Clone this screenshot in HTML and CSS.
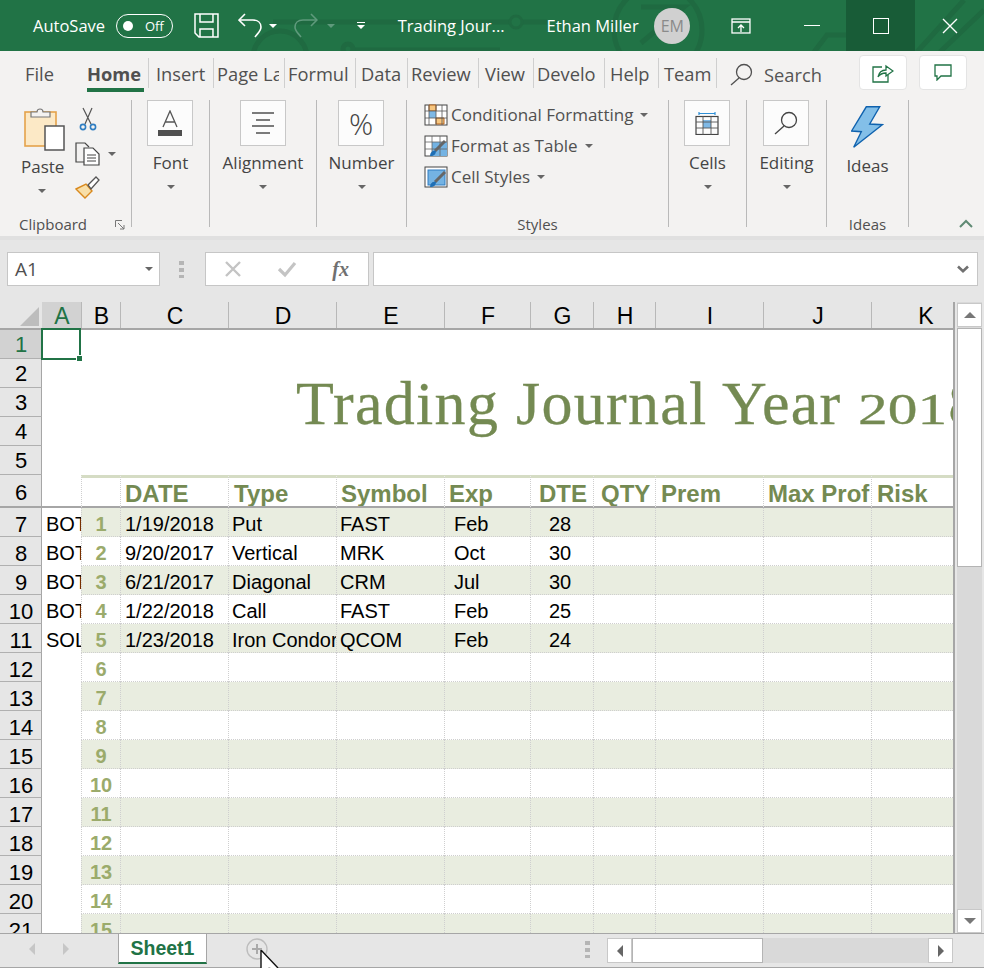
FILE: index.html
```html
<!DOCTYPE html>
<html lang="en">
<head>
<meta charset="UTF-8" />
<title>Trading Journal - Excel</title>
<link rel="stylesheet" href="styles.css">
</head>
<body>

<!-- title bar -->
<header class="titlebar">
  <svg class="circuit" width="984" height="51" viewBox="0 0 984 51" fill="none" stroke="#1f6a41" stroke-width="5">
    <path d="M273 22H547" />
    <circle cx="516" cy="22" r="6" stroke-width="3" fill="#217346" />
    <circle cx="280" cy="58" r="27" />
    <path d="M353 50H500" />
    <circle cx="348" cy="49" r="5" />
    <circle cx="658" cy="30" r="44" />
    <path d="M641 7H684L641 43" />
    <path d="M814 52L827 35H847M917 52L964 0M940 52L984 10" />
  </svg>
  <span class="autosave">AutoSave</span>
  <span class="toggle"><i></i>Off</span>
  <svg class="qat save" width="25" height="25" viewBox="0 0 25 25" fill="none" stroke="#fff" stroke-width="1.5">
    <path d="M1 1H24V24H5L1 20Z" /><path d="M6 1V9H19V1M6 24V16H19V24" />
  </svg>
  <svg class="qat undo" width="24" height="26" viewBox="0 0 24 26" fill="none" stroke="#fff" stroke-width="1.6">
    <path d="M1 7H15C20 7 23 10 23 14C23 18 20 20 17 24" /><path d="M7 1L1 7L7 13" />
  </svg>
  <i class="caret white undo-caret"></i>
  <svg class="qat redo" width="24" height="26" viewBox="0 0 24 26" fill="none" stroke="#5f9a7c" stroke-width="1.6">
    <path d="M23 7H9C4 7 1 10 1 14C1 18 4 20 7 24" /><path d="M17 1L23 7L17 13" />
  </svg>
  <i class="caret faded redo-caret"></i>
  <span class="qat-more"><b></b><i class="caret white"></i></span>
  <span class="doc-name">Trading Jour...</span>
  <span class="user-name">Ethan Miller</span>
  <span class="avatar">EM</span>
  <svg class="display-btn" width="20" height="16" viewBox="0 0 20 16" fill="none" stroke="#fff" stroke-width="1.3">
    <rect x="1" y="1" width="18" height="14" /><path d="M1 4H19M10 14V7M7 10L10 7L13 10" />
  </svg>
  <div class="win-btn min"><span></span></div>
  <div class="win-btn max"><span></span></div>
  <div class="win-btn close">
    <svg width="16" height="16" viewBox="0 0 16 16" stroke="#fff" stroke-width="1.4"><path d="M1 1L15 15M15 1L1 15" /></svg>
  </div>
</header>

<!-- ribbon tabs -->
<nav class="tabs">
  <span class="tab tab-file">File</span>
  <span class="tab tab-home">Home</span>
  <span class="tab w64">Insert</span>
  <span class="tab w71 cut">Page La</span>
  <span class="tab w71">Formul</span>
  <span class="tab w52">Data</span>
  <span class="tab w71">Review</span>
  <span class="tab w55">View</span>
  <span class="tab w71">Develo</span>
  <span class="tab w54">Help</span>
  <span class="tab w59">Team</span>
  <span class="search">
    <svg width="23" height="23" viewBox="0 0 23 23" fill="none" stroke="#505050" stroke-width="1.3"><circle cx="14" cy="9" r="7.5" /><path d="M9 15L1 22" /></svg>
    Search
  </span>
  <span class="pill share">
    <svg width="22" height="20" viewBox="0 0 22 20" fill="none" stroke="#217346" stroke-width="1.3"><path d="M10 4H1V19H16V12" /><path d="M6 14C7 9 10 7 14 7V3L21 8L14 13V10C11 10 8 11 6 14Z" /></svg>
  </span>
  <span class="pill comment">
    <svg width="18" height="17" viewBox="0 0 18 17" fill="none" stroke="#217346" stroke-width="1.3"><path d="M1 1H17V12H7L3 16V12H1Z" /></svg>
  </span>
</nav>

<!-- ribbon -->
<section class="ribbon">
  <div class="group g-clip">
    <div class="clip-body">
      <div class="paste">
        <svg width="42" height="45" viewBox="0 0 42 45" fill="none">
          <rect x="1" y="6" width="31" height="34" fill="#fce9c6" stroke="#e4a24a" stroke-width="1.6" />
          <path d="M7 11V6H13C13 2 19 2 19 6H26V11Z" fill="#f4f2f0" stroke="#777" stroke-width="1.2" />
          <rect x="21" y="20" width="19" height="24" fill="#fff" stroke="#555" stroke-width="1.5" />
        </svg>
        <span class="paste-label">Paste</span>
        <i class="caret"></i>
      </div>
      <div class="clip-tools">
        <svg width="18" height="25" viewBox="0 0 18 25" fill="none">
          <path d="M4 1L12 17M13 1L6 17" stroke="#555" stroke-width="1.2" />
          <circle cx="4" cy="20" r="2.6" stroke="#2f7dc1" stroke-width="1.6" />
          <circle cx="14" cy="20" r="2.6" stroke="#2f7dc1" stroke-width="1.6" />
        </svg>
        <span class="copy-row">
          <svg width="25" height="24" viewBox="0 0 25 24" fill="none" stroke="#444" stroke-width="1.2">
            <path d="M12 20H1V1H10L14 5" /><path d="M9 6H18L24 12V23H9Z" fill="#fff" /><path d="M12 13H21M12 16H21M12 19H21" />
          </svg>
          <i class="caret"></i>
        </span>
        <svg width="25" height="23" viewBox="0 0 25 23">
          <path d="M1 13L11 8L17 15L10 22Z" fill="#f8dfa8" stroke="#d98a1f" stroke-width="1.4" />
          <path d="M13 9L21 1L24 4L16 13Z" fill="#fff" stroke="#555" stroke-width="1.3" />
        </svg>
      </div>
    </div>
    <div class="group-label">Clipboard
      <svg class="launcher" width="10" height="10" viewBox="0 0 10 10" fill="none" stroke="#777"><path d="M.5 7V.5H7M3 3L9 9M9 5V9H5" /></svg>
    </div>
  </div>

  <div class="group g-font">
    <span class="big-btn">
      <svg width="26" height="26" viewBox="0 0 26 26" fill="none"><path d="M6 17L13 1L20 17M8 12H18" stroke="#555" stroke-width="1.3" /><rect x="1" y="20" width="24" height="6" fill="#505050" /></svg>
    </span>
    <span class="btn-label">Font</span><i class="caret"></i>
  </div>

  <div class="group g-align">
    <span class="big-btn">
      <svg width="24" height="22" viewBox="0 0 24 22" stroke="#505050" stroke-width="1.4"><path d="M1 1H23M5 8H19M1 14H23M5 21H19" /></svg>
    </span>
    <span class="btn-label">Alignment</span><i class="caret"></i>
  </div>

  <div class="group g-number">
    <span class="big-btn percent">%</span>
    <span class="btn-label">Number</span><i class="caret"></i>
  </div>

  <div class="group g-styles">
    <ul class="style-list">
      <li>
        <svg width="24" height="22" viewBox="0 0 24 22" fill="none">
          <rect x="1" y="1" width="22" height="20" fill="#fff" stroke="#444" />
          <path d="M5 1H12V7H5ZM12 14H20V20H12Z" fill="#f7c67f" stroke="#b4631c" /><rect x="5" y="7" width="7" height="7" fill="#7fb9e6" />
          <path d="M1 7H23M1 14H23M5 1V21M12 1V21M18 1V21" stroke="#555" stroke-width=".8" />
        </svg>
        Conditional Formatting <i class="caret"></i>
      </li>
      <li>
        <svg width="24" height="22" viewBox="0 0 24 22" fill="none">
          <rect x="1" y="1" width="22" height="20" fill="#fff" stroke="#444" />
          <rect x="8" y="7" width="15" height="14" fill="#74b3e3" />
          <path d="M1 7H23M1 14H23M8 1V21M16 1V21" stroke="#666" stroke-width=".8" />
          <path d="M11 16L21 6" stroke="#666" stroke-width="3" /><path d="M6 21C6 17 9 15 12 16C12 19 10 21 6 21Z" fill="#1f6fb5" />
        </svg>
        Format as Table <i class="caret"></i>
      </li>
      <li>
        <svg width="24" height="22" viewBox="0 0 24 22" fill="none">
          <rect x="1" y="1" width="22" height="20" fill="#fff" stroke="#444" />
          <rect x="4" y="4" width="17" height="15" fill="#74b3e3" stroke="#2f7dc1" />
          <path d="M11 16L21 6" stroke="#666" stroke-width="3" /><path d="M6 21C6 17 9 15 12 16C12 19 10 21 6 21Z" fill="#1f6fb5" />
        </svg>
        Cell Styles <i class="caret"></i>
      </li>
    </ul>
    <div class="group-label">Styles</div>
  </div>

  <div class="group g-cells">
    <span class="big-btn">
      <svg width="24" height="23" viewBox="0 0 24 23" fill="none">
        <path d="M4 1.5H20M4 0V3M20 0V3" stroke="#2f8fd6" stroke-width="1.2" />
        <rect x="8" y="8" width="8" height="8" fill="#7fb9e6" />
        <rect x="1" y="4.5" width="22" height="18" stroke="#444" stroke-width="1.2" />
        <path d="M1 10H23M1 16H23M8 4V23M16 4V23" stroke="#555" stroke-width=".9" />
      </svg>
    </span>
    <span class="btn-label">Cells</span><i class="caret"></i>
  </div>

  <div class="group g-edit">
    <span class="big-btn">
      <svg width="24" height="24" viewBox="0 0 24 24" fill="none" stroke="#444" stroke-width="1.3"><circle cx="15" cy="9" r="7.5" /><path d="M10 15L1 23" /></svg>
    </span>
    <span class="btn-label">Editing</span><i class="caret"></i>
  </div>

  <div class="group g-ideas">
    <svg class="bolt" width="33" height="43" viewBox="0 0 33 43"><path d="M15.3 .8H28.7L18.7 18L31.3 18.7L2.7 41.3L10.3 25.7L.6 25Z" fill="#83bfe8" stroke="#0f62ae" stroke-width="1.4" /></svg>
    <span class="ideas-label">Ideas</span>
    <div class="group-label">Ideas</div>
  </div>

  <svg class="collapse" width="14" height="9" viewBox="0 0 14 9" fill="none" stroke="#5f8a74" stroke-width="2"><path d="M1 8L7 2L13 8" /></svg>
</section>

<!-- formula bar -->
<section class="formula">
  <div class="namebox">A1<i class="caret"></i></div>
  <span class="grip"></span>
  <div class="fx-box">
    <svg width="18" height="18" viewBox="0 0 18 18" stroke="#c4c4c4" stroke-width="2.4"><path d="M2 2L16 16M16 2L2 16" /></svg>
    <svg width="20" height="18" viewBox="0 0 20 18" fill="none" stroke="#c4c4c4" stroke-width="3.2"><path d="M2 9L8 15L18 3" /></svg>
    <span class="fx">fx</span>
  </div>
  <div class="formula-input">
    <svg width="12" height="8" viewBox="0 0 12 8" fill="none" stroke="#707070" stroke-width="2.6"><path d="M1 1.5L6 6.2L11 1.5" /></svg>
  </div>
</section>

<!-- sheet and vertical scrollbar -->
<section class="workarea">
  <div class="sheet">
    <div class="row heads">
      <span class="corner"><b></b></span>
      <span class="sel">A</span><span>B</span><span>C</span><span>D</span><span>E</span><span>F</span><span>G</span><span>H</span><span>I</span><span>J</span><span>K</span>
    </div>
    <div class="banner">
      <div class="banner-heads">
        <span class="rh sel">1</span><span class="rh">2</span><span class="rh">3</span><span class="rh">4</span><span class="rh">5</span>
      </div>
      <div class="title">Trading Journal Year <span class="onum">201</span>8</div>
    </div>
    <div class="row thead">
      <span class="rh">6</span><span class="a"></span><span></span>
      <span>DATE</span><span>Type</span><span>Symbol</span><span>Exp</span><span class="c-dte">DTE</span><span class="c-qty">QTY</span><span>Prem</span><span>Max Prof</span><span>Risk</span>
    </div>
    <div class="row band"><span class="rh">7</span><span class="a">BOT</span><span class="n">1</span><span>1/19/2018</span><span>Put</span><span>FAST</span><span class="exp">Feb</span><span class="dte">28</span><span></span><span></span><span></span><span></span></div>
    <div class="row"><span class="rh">8</span><span class="a">BOT</span><span class="n">2</span><span>9/20/2017</span><span>Vertical</span><span>MRK</span><span class="exp">Oct</span><span class="dte">30</span><span></span><span></span><span></span><span></span></div>
    <div class="row band"><span class="rh">9</span><span class="a">BOT</span><span class="n">3</span><span>6/21/2017</span><span>Diagonal</span><span>CRM</span><span class="exp">Jul</span><span class="dte">30</span><span></span><span></span><span></span><span></span></div>
    <div class="row"><span class="rh">10</span><span class="a">BOT</span><span class="n">4</span><span>1/22/2018</span><span>Call</span><span>FAST</span><span class="exp">Feb</span><span class="dte">25</span><span></span><span></span><span></span><span></span></div>
    <div class="row band"><span class="rh">11</span><span class="a">SOL</span><span class="n">5</span><span>1/23/2018</span><span>Iron Condor</span><span>QCOM</span><span class="exp">Feb</span><span class="dte">24</span><span></span><span></span><span></span><span></span></div>
    <div class="row"><span class="rh">12</span><span class="a"></span><span class="n">6</span><span></span><span></span><span></span><span></span><span></span><span></span><span></span><span></span><span></span></div>
    <div class="row band"><span class="rh">13</span><span class="a"></span><span class="n">7</span><span></span><span></span><span></span><span></span><span></span><span></span><span></span><span></span><span></span></div>
    <div class="row"><span class="rh">14</span><span class="a"></span><span class="n">8</span><span></span><span></span><span></span><span></span><span></span><span></span><span></span><span></span><span></span></div>
    <div class="row band"><span class="rh">15</span><span class="a"></span><span class="n">9</span><span></span><span></span><span></span><span></span><span></span><span></span><span></span><span></span><span></span></div>
    <div class="row"><span class="rh">16</span><span class="a"></span><span class="n">10</span><span></span><span></span><span></span><span></span><span></span><span></span><span></span><span></span><span></span></div>
    <div class="row band"><span class="rh">17</span><span class="a"></span><span class="n">11</span><span></span><span></span><span></span><span></span><span></span><span></span><span></span><span></span><span></span></div>
    <div class="row"><span class="rh">18</span><span class="a"></span><span class="n">12</span><span></span><span></span><span></span><span></span><span></span><span></span><span></span><span></span><span></span></div>
    <div class="row band"><span class="rh">19</span><span class="a"></span><span class="n">13</span><span></span><span></span><span></span><span></span><span></span><span></span><span></span><span></span><span></span></div>
    <div class="row"><span class="rh">20</span><span class="a"></span><span class="n">14</span><span></span><span></span><span></span><span></span><span></span><span></span><span></span><span></span><span></span></div>
    <div class="row band"><span class="rh">21</span><span class="a"></span><span class="n">15</span><span></span><span></span><span></span><span></span><span></span><span></span><span></span><span></span><span></span></div>
    <div class="cell-cursor"><b></b></div>
  </div>
  <div class="vscroll">
    <span class="sb-btn"><i class="arrow up"></i></span>
    <span class="sb-thumb"></span>
    <span class="sb-btn sb-end"><i class="arrow down"></i></span>
  </div>
</section>

<!-- sheet tabs and horizontal scrollbar -->
<footer class="statusbar">
  <i class="arrow left pale"></i>
  <i class="arrow right pale"></i>
  <span class="sheet-tab">Sheet1</span>
  <span class="add-sheet">
    <svg width="22" height="22" viewBox="0 0 22 22" fill="none" stroke="#bdbdbd"><circle cx="11" cy="11" r="10" stroke-width="1.4" /><path d="M11 6V16M6 11H16" stroke="#aaa" stroke-width="2" /></svg>
  </span>
  <span class="grip"></span>
  <div class="hscroll">
    <span class="sb-btn"><i class="arrow left"></i></span>
    <span class="sb-thumb"></span>
    <span class="sb-btn sb-end"><i class="arrow right"></i></span>
  </div>
  <svg class="pointer" width="20" height="19" viewBox="0 0 20 19"><path d="M1 0V19H7L9 17L13 19H19L7 5Z" fill="#fff" /><path d="M1 0V19M1 0L18 18" fill="none" stroke="#111" stroke-width="1.4" /></svg>
</footer>

</body>
</html>
```

FILE: styles.css
```css
* {
  box-sizing: border-box;
}
html,
body {
  margin: 0;
  height: 968px;
  overflow: hidden;
}
body {
  width: 984px;
  display: flex;
  flex-direction: column;
  font-family: "Open Sans", "Noto Sans", sans-serif;
  color: #444;
  background: #f3f2f1;
}

/* shared bits */
.caret {
  display: inline-block;
  width: 0;
  height: 0;
  border-left: 4px solid transparent;
  border-right: 4px solid transparent;
  border-top: 4px solid #666;
}
.caret.white {
  border-top-color: #fff;
}
.caret.faded {
  border-top-color: #5f9a7c;
}
.grip {
  width: 5px;
  height: 17px;
  background: repeating-linear-gradient(#b5b5b5 0 4px, transparent 4px 7px);
}
.arrow {
  display: block;
  width: 0;
  height: 0;
  border: 6px solid transparent;
}
.arrow.up {
  border-top: 0;
  border-bottom: 6px solid #777;
}
.arrow.down {
  border-bottom: 0;
  border-top: 6px solid #777;
}
.arrow.left {
  border-left: 0;
  border-right: 6px solid #666;
}
.arrow.right {
  border-right: 0;
  border-left: 6px solid #666;
}
.arrow.left.pale {
  border-right-color: #c6c6c6;
}
.arrow.right.pale {
  border-left-color: #c6c6c6;
}

/* title bar */
.titlebar {
  position: relative;
  height: 51px;
  flex: none;
  display: flex;
  align-items: center;
  background: #217346;
  color: #fff;
  font-size: 16.5px;
}
.titlebar > * {
  position: relative;
}
.titlebar .circuit {
  position: absolute;
  left: 0;
  top: 0;
}
.autosave {
  margin-left: 33px;
  width: 83px;
}
.toggle {
  width: 57px;
  height: 24px;
  border: 1px solid #fff;
  border-radius: 12px;
  display: flex;
  align-items: center;
  justify-content: flex-end;
  padding-right: 8px;
  font-size: 13px;
}
.toggle i {
  position: absolute;
  left: 6px;
  top: 6px;
  width: 10px;
  height: 10px;
  border-radius: 50%;
  background: #fff;
}
.qat.save {
  margin-left: 21px;
}
.qat.undo {
  margin-left: 19px;
}
.undo-caret {
  margin-left: 7px;
}
.qat.redo {
  margin-left: 17px;
}
.redo-caret {
  margin-left: 9px;
}
.qat-more {
  margin-left: 22px;
  width: 8px;
  display: flex;
  flex-direction: column;
  gap: 2px;
}
.qat-more b {
  height: 1px;
  background: #fff;
}
.doc-name {
  margin-left: 33px;
  width: 149px;
  white-space: nowrap;
}
.user-name {
  width: 108px;
  white-space: nowrap;
}
.avatar {
  width: 36px;
  height: 36px;
  border-radius: 50%;
  background: #d0d0d0;
  color: #8a8a8a;
  font-size: 16px;
  display: flex;
  align-items: center;
  justify-content: center;
}
.display-btn {
  margin-left: 41px;
}
.win-btn {
  width: 69px;
  height: 51px;
  display: flex;
  align-items: center;
  justify-content: center;
}
.win-btn.min {
  margin-left: 26px;
  width: 70px;
  margin-right: -1px;
}
.win-btn.min span {
  width: 16px;
  height: 1.5px;
  background: #fff;
}
.win-btn.max {
  background: #185c37;
}
.win-btn.max span {
  width: 16px;
  height: 16px;
  border: 1.5px solid #fff;
}

/* ribbon tabs */
.tabs {
  height: 44px;
  flex: none;
  display: flex;
  align-items: flex-start;
  padding-top: 7px;
  font-size: 18.3px;
  color: #505050;
}
.tab {
  height: 30px;
  line-height: 32px;
  text-align: left;
  overflow: hidden;
  white-space: nowrap;
  border-left: 1px solid #cfcfcf;
}
.tab-file {
  width: 87px;
  padding-left: 25px;
  border-left: 0;
}
.tab-home {
  position: relative;
  width: 61px;
  border-left: 0;
  font-weight: 700;
  overflow: visible;
}
.tab-home::after {
  content: "";
  position: absolute;
  left: 0;
  top: 30px;
  width: 57px;
  height: 4px;
  background: #217346;
}
.w64 {
  width: 65px;
  padding-left: 7px;
}
.w71 {
  width: 71px;
  padding-left: 3px;
}
.w71.cut {
  width: 66px;
  margin-right: 5px;
}
.w52 {
  width: 52px;
  padding-left: 5px;
}
.w55 {
  width: 55px;
  padding-left: 6px;
}
.w54 {
  width: 54px;
  padding-left: 5px;
}
.w59 {
  width: 59px;
  padding-left: 5px;
  border-right: 1px solid #cfcfcf;
}
.search {
  margin-left: 13px;
  display: flex;
  align-items: center;
  gap: 11px;
  height: 32px;
  width: 129px;
  color: #555;
}
.pill {
  width: 48px;
  height: 35px;
  margin-top: -3px;
  background: #fff;
  border: 1px solid #e4e4e4;
  border-radius: 4px;
  display: flex;
  align-items: center;
  justify-content: center;
}
.comment {
  margin-left: 12px;
}

/* ribbon */
.ribbon {
  position: relative;
  height: 145px;
  flex: none;
  display: flex;
  padding-bottom: 9px;
  padding-top: 5px;
  background: #f3f2f1;
  border-bottom: 4px solid #e0e0e0;
  font-size: 17px;
}
.group {
  position: relative;
  display: flex;
  flex-direction: column;
  align-items: center;
  border-right: 1px solid #b9b9b9;
}
.g-clip { width: 132px; }
.g-font { width: 78px; }
.g-align { width: 107px; }
.g-number { width: 90px; }
.g-styles { width: 262px; }
.g-cells { width: 78px; }
.g-edit { width: 80px; }
.g-ideas { width: 82px; }
.group-label {
  position: absolute;
  bottom: -6px;
  left: 0;
  right: 0;
  text-align: center;
  font-size: 15px;
  line-height: 18px;
  color: #505050;
}
.group .launcher {
  position: absolute;
  left: 115px;
  top: 5px;
}
.g-clip .group-label {
  text-align: left;
  padding-left: 19px;
}
.big-btn {
  width: 46px;
  height: 46px;
  margin-right: 1px;
  background: #fcfcfc;
  border: 1px solid #c8c8c8;
  display: flex;
  align-items: center;
  justify-content: center;
}
.percent {
  font-size: 30px;
  font-weight: 300;
  color: #444;
}
.btn-label {
  margin-top: 5px;
  line-height: 24px;
}
.group > .caret {
  margin-top: 10px;
}

.clip-body {
  display: flex;
  width: 100%;
  padding: 6px 0 0 24px;
}
.paste {
  width: 51px;
  display: flex;
  flex-direction: column;
  align-items: flex-start;
}
.paste-label {
  width: 42px;
  margin-left: -3px;
  text-align: center;
  line-height: 22px;
  margin-top: 5px;
}
.paste .caret {
  margin: 11px 0 0 14px;
}
.clip-tools {
  display: flex;
  flex-direction: column;
  align-items: flex-start;
  gap: 11px;
  margin-top: 1px;
}
.clip-tools > svg:first-child {
  margin-left: 4px;
}
.copy-row {
  display: flex;
  align-items: center;
  gap: 8px;
  height: 22px;
}

.style-list {
  list-style: none;
  margin: -1px 0 0;
  padding: 0 0 0 17px;
  width: 100%;
}
.style-list li {
  height: 31px;
  display: flex;
  align-items: center;
  gap: 3px;
  white-space: nowrap;
  color: #505050;
}
.style-list .caret {
  margin-left: 4px;
}

.bolt {
  margin-top: 6px;
}
.ideas-label {
  margin-top: 5px;
  line-height: 24px;
}
.collapse {
  position: absolute;
  left: 959px;
  top: 124px;
}

/* formula bar */
.formula {
  height: 62px;
  flex: none;
  display: flex;
  align-items: flex-start;
  padding: 12px 6px 0 7px;
  background: #e6e6e6;
}
.namebox {
  width: 153px;
  height: 34px;
  background: #fff;
  border: 1px solid #c6c6c6;
  padding-left: 7px;
  line-height: 32px;
  font-size: 19px;
  color: #505050;
  display: flex;
  justify-content: space-between;
  align-items: center;
}
.namebox .caret {
  margin-right: 6px;
}
.formula .grip {
  margin: 9px 21px 0 19px;
}
.fx-box {
  width: 164px;
  height: 34px;
  background: #fff;
  border: 1px solid #c6c6c6;
  display: flex;
  align-items: center;
  padding: 0 19px 0 18px;
  justify-content: space-between;
}
.fx {
  font-family: "Liberation Serif", serif;
  font-style: italic;
  font-weight: 700;
  font-size: 20px;
  color: #707070;
}
.formula-input {
  flex: 1;
  height: 34px;
  margin-left: 4px;
  background: #fff;
  border: 1px solid #c6c6c6;
  display: flex;
  align-items: center;
  justify-content: flex-end;
  padding-right: 8px;
}

/* sheet */
.workarea {
  height: 631px;
  flex: none;
  display: flex;
  background: #e6e6e6;
}
.sheet {
  --cols: 42px 39px 39px 108px 108px 108px 86px 63px 62px 108px 108px 108px;
  position: relative;
  width: 955px;
  height: 631px;
  overflow: hidden;
  background: #fff;
  border-right: 2px solid #a6a6a6;
  font-family: "Liberation Sans", Arial, sans-serif;
  font-size: 20px;
  color: #000;
}
.row {
  display: grid;
  grid-template-columns: var(--cols);
  height: 29px;
}
.row > span {
  overflow: hidden;
  white-space: nowrap;
  line-height: 33px;
  padding-left: 4px;
  border-left: 1px dotted #cfcfcf;
  border-bottom: 1px dotted #cfcfcf;
}
.row > span:nth-child(5),
.row > span:nth-child(6) {
  padding-left: 3px;
}
.row > .a {
  padding-left: 4px;
  border-left: 0;
  border-bottom: 0;
  background: #fff;
}
.row > .rh,
.banner-heads .rh {
  padding: 0 0 0 1px;
  text-align: center;
  font-size: 22px;
  background: #e6e6e6;
  border-left: 0;
  border-right: 1px solid #a6a6a6;
  border-bottom: 1px solid #b0b0b0;
}
.band > span {
  background: #e9ede0;
}
.row > .n {
  padding: 0;
  text-align: center;
  font-weight: 700;
  color: #9bab6c;
}
.row > .exp {
  padding-left: 9px;
}
.row > .dte {
  padding-left: 18px;
}

/* column letters */
.row.heads {
  height: 28px;
  background: #e6e6e6;
  border-bottom: 2px solid #a6a6a6;
}
.row.heads > span {
  padding: 0 0 0 1px;
  text-align: center;
  font-size: 23px;
  line-height: 29px;
  border-bottom: 0;
  border-left: 1px solid #b8b8b8;
}
.row.heads > .corner {
  border-left: 0;
  position: relative;
}
.corner b {
  position: absolute;
  right: 3px;
  bottom: 2px;
  width: 0;
  height: 0;
  border-left: 19px solid transparent;
  border-bottom: 19px solid #bdbdbd;
}
.row.heads > .sel {
  background: #d2d2d2;
  color: #217346;
  border-left: 0;
}
.banner {
  display: flex;
  height: 145px;
}
.banner-heads {
  width: 42px;
  flex: none;
  display: flex;
  flex-direction: column;
}
.banner-heads .rh {
  height: 29px;
  line-height: 29px;
}
.banner-heads .sel {
  background: #d2d2d2;
  color: #217346;
}
.title {
  flex: 1;
  overflow: hidden;
  white-space: nowrap;
  padding: 35px 0 0 254px;
  font-family: "Liberation Serif", serif;
  font-size: 62px;
  line-height: 76px;
  letter-spacing: 1.3px;
  color: #748a52;
  -webkit-text-stroke: 0.3px #748a52;
}
.onum {
  display: inline-block;
  width: 90px;
  font-size: 44px;
  letter-spacing: 0;
  transform: scaleX(1.35);
  transform-origin: left;
}

/* table heading row */
.row.thead {
  height: 33px;
}
.row.thead > span {
  font-size: 24px;
  font-weight: 700;
  line-height: 31px;
  padding-left: 4px;
  color: #748a52;
  border-top: 3px solid #d5dcc4;
  border-bottom: 2px solid #a6a6a6;
}
.row.thead > span:nth-child(5),
.row.thead > span:nth-child(10),
.row.thead > span:nth-child(12) {
  padding-left: 5px;
}
.row.thead > .rh {
  font-size: 22px;
  font-weight: 400;
  color: #000;
  border-top: 0;
  line-height: 35px;
  padding-left: 1px;
}
.row.thead > .a {
  border-top: 0;
}
.row.thead > .c-dte {
  padding-left: 8px;
}
.row.thead > .c-qty {
  padding-left: 7px;
}
.cell-cursor {
  position: absolute;
  left: 41px;
  top: 26px;
  width: 40px;
  height: 32px;
  border: 2px solid #217346;
}
.cell-cursor b {
  position: absolute;
  right: -4px;
  bottom: -4px;
  width: 7px;
  height: 7px;
  background: #217346;
  border: 1px solid #fff;
}

/* scrollbars */
.vscroll {
  width: 29px;
  padding-top: 1px;
  display: flex;
  flex-direction: column;
  background: #d9d9d9;
  border-left: 2px solid #e6e6e6;
  border-right: 2px solid #e6e6e6;
}
.vscroll .sb-btn {
  height: 24px;
  flex: none;
  background: #fff;
  border: 1px solid #c8c8c8;
  display: flex;
  align-items: center;
  justify-content: center;
}
.vscroll .sb-thumb {
  height: 239px;
  margin-top: 1px;
  flex: none;
  background: #fff;
  border: 1px solid #b4b4b4;
}
.vscroll .sb-end {
  margin-top: auto;
}
.statusbar {
  position: relative;
  flex: 1;
  display: flex;
  align-items: flex-start;
  background: #e6e6e6;
  border-top: 1px solid #a6a6a6;
  border-bottom: 1px solid #a6a6a6;
}
.statusbar > .arrow {
  margin-top: 9px;
}
.statusbar > .arrow.left {
  margin-left: 29px;
}
.statusbar > .arrow.right {
  margin-left: 28px;
}
.sheet-tab {
  margin-left: 49px;
  width: 89px;
  height: 30px;
  background: #fff;
  border: 1px solid #a6a6a6;
  border-top: 0;
  border-bottom: 2px solid #217346;
  text-align: center;
  font-family: "Liberation Sans", Arial, sans-serif;
  font-weight: 700;
  font-size: 19.5px;
  line-height: 29px;
  color: #217346;
}
.add-sheet {
  margin: 4px 0 0 39px;
}
.statusbar .grip {
  margin: 7px 0 0 317px;
}
.hscroll {
  margin: 4px 0 0 17px;
  width: 346px;
  height: 25px;
  display: flex;
  background: #d9d9d9;
}
.hscroll .sb-btn {
  width: 25px;
  background: #fff;
  border: 1px solid #c8c8c8;
  display: flex;
  align-items: center;
  justify-content: center;
}
.hscroll .sb-thumb {
  width: 131px;
  background: #fff;
  border: 1px solid #b4b4b4;
}
.hscroll .sb-end {
  margin-left: auto;
}
.pointer {
  position: absolute;
  left: 260px;
  top: 16px;
}
```
